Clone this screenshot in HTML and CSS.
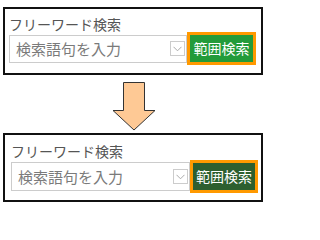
FILE: index.html
```html
<!DOCTYPE html>
<html lang="ja">
<head>
<meta charset="utf-8">
<link rel="stylesheet" href="styles.css">
</head>
<body>
<div class="panel panel-a">
  <div class="label">フリーワード検索</div>
  <div class="row">
    <div class="field">
      <span class="placeholder">検索語句を入力</span>
      <span class="dd"><svg width="9" height="6" viewBox="0 0 9 6"><path d="M0.5 0.8 L4.5 4.8 L8.5 0.8" fill="none" stroke="#aaa" stroke-width="1"/></svg></span>
    </div>
    <div class="btn">範囲検索</div>
  </div>
</div>
<div class="arrow">
  <svg width="44" height="50" viewBox="0 0 44 50"><polygon points="11.5,1.5 32.5,1.5 32.5,29.5 43,29.5 22,49 1,29.5 11.5,29.5" fill="#fec995" stroke="#333" stroke-width="1"/></svg>
</div>
<div class="panel panel-b">
  <div class="label">フリーワード検索</div>
  <div class="row">
    <div class="field">
      <span class="placeholder">検索語句を入力</span>
      <span class="dd"><svg width="9" height="6" viewBox="0 0 9 6"><path d="M0.5 0.8 L4.5 4.8 L8.5 0.8" fill="none" stroke="#aaa" stroke-width="1"/></svg></span>
    </div>
    <div class="btn btn-dark">範囲検索</div>
  </div>
</div>
</body>
</html>
```
FILE: styles.css
```css
html, body {
  margin: 0;
  padding: 0;
  background: #fff;
}
body {
  width: 267px;
  height: 205px;
  overflow: hidden;
  font-family: "Noto Sans CJK JP", "Noto Sans", sans-serif;
}
.panel {
  box-sizing: border-box;
  width: 260px;
  margin-left: 3px;
  border: 2px solid #111;
}
.panel-a {
  margin-top: 7px;
  height: 68px;
  padding: 7px 5px 0 4px;
}
.panel-b {
  height: 69px;
  padding: 8px 3px 0 6px;
}
.label {
  font-size: 14px;
  line-height: 16px;
  color: #555;
}
.row {
  display: flex;
  align-items: center;
  height: 33px;
}
.panel-b .row {
  margin-top: 1px;
}
.field {
  box-sizing: border-box;
  flex: 1;
  height: 28px;
  border: 1px solid #ccc;
  display: flex;
  align-items: center;
  padding: 0 1px 0 6px;
}
.panel-b .field {
  height: 29px;
}
.placeholder {
  flex: 1;
  font-size: 15px;
  line-height: 18px;
  color: #7a7a7a;
  white-space: nowrap;
}
.dd {
  box-sizing: border-box;
  width: 15px;
  height: 15px;
  border: 1px solid #ccc;
  display: flex;
  align-items: center;
  justify-content: center;
}
.btn {
  box-sizing: border-box;
  width: 69px;
  height: 33px;
  border: 3px solid #ff9900;
  background: #239b3a;
  color: #fff;
  font-size: 14px;
  line-height: 27px;
  text-align: center;
  white-space: nowrap;
  letter-spacing: 0;
}
.btn-dark {
  width: 68px;
  background: #2d5f2f;
}
.arrow {
  display: flex;
  justify-content: center;
  margin-top: 6px;
  margin-bottom: 2px;
  height: 50px;
}
.arrow svg {
  display: block;
}
```
